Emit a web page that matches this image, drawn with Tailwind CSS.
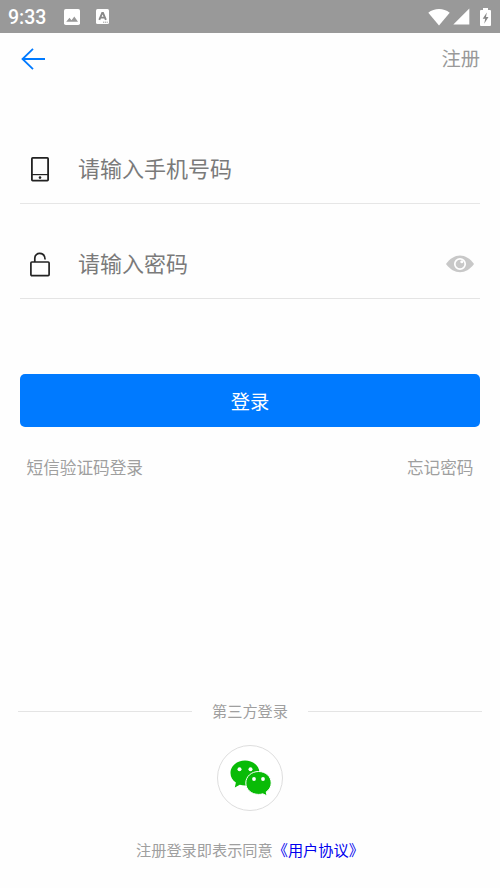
<!DOCTYPE html>
<html lang="zh-CN">
<head>
<meta charset="utf-8">
<meta name="viewport" content="width=device-width, initial-scale=1">
<title>登录</title>
<script src="https://cdn.jsdelivr.net/npm/@tailwindcss/browser@4"></script>
</head>
<body class="bg-white">
<div class="flex h-[888px] w-[500px] flex-col overflow-hidden bg-[#fefefe] font-['Noto_Sans_CJK_SC',sans-serif]">
  <!-- Status bar -->
  <div class="flex h-[33px] shrink-0 items-center bg-[#999999] pl-2 pr-[9px] text-white">
    <span class="w-[56px] pt-[2px] font-[Roboto,sans-serif] text-[19.5px] leading-none font-medium">9:33</span>
    <svg class="h-[16px] w-[16px]" viewBox="0 0 16 16"><rect width="16" height="16" rx="1.8" fill="#fff"/><path d="M2.2 12.8 5.5 8.8l2 2.4 2.8-3.6 3.7 5.2z" fill="#999"/></svg>
    <svg class="ml-[16px] h-[15px] w-[13px]" viewBox="0 0 13 15"><rect width="13" height="15" rx="1.5" fill="#fff"/><path d="M3.300 10.800 6.200 4h.8l2.900 6.800M4.400 8.600h4.400" fill="none" stroke="#888" stroke-width="1.900"/><path d="M7 13.2h5" stroke="#999" stroke-width="1" stroke-dasharray="1.2 .6"/></svg>
    <div class="ml-auto flex items-center">
      <svg class="h-[18px] w-[22px]" viewBox="0 0 22 18"><path d="M.3 4.7C6.4-.3 15.6-.3 21.7 4.7L11 17.6z" fill="#fff"/></svg>
      <svg class="ml-[3px] h-[17px] w-[17px]" viewBox="0 0 17 17"><path d="M16.3.5v16H.3z" fill="#fff"/></svg>
      <svg class="ml-[10px] h-[18px] w-[11px]" viewBox="0 0 11 18"><path d="M3 0h5v2h2q1 0 1 1v14q0 1-1 1H1q-1 0-1-1V3q0-1 1-1h2z" fill="#fff"/><path d="M6.800 4.500 2.700 10.700h2.500L4.200 15.800 8.500 9H6z" fill="#888"/></svg>
    </div>
  </div>
  <!-- Navigation -->
  <header class="flex h-[52px] shrink-0 items-center justify-between px-5">
    <svg class="h-[22px] w-[26px]" viewBox="0 0 26 22"><path d="M13 .8 2.5 11 13 21.2M2.500 11H25" fill="none" stroke="#007aff" stroke-width="1.8"/></svg>
    <a class="text-[19.3px] leading-none text-[#999]">注册</a>
  </header>
  <main class="flex flex-col px-5 pt-[49px]">
    <div class="flex h-[70px] items-start border-b border-[#e6e6e6]">
      <div class="flex h-[70px] w-[58px] items-center pl-[11px]">
        <svg class="h-[25px] w-[18px]" viewBox="0 0 18 25"><rect x=".9" y=".9" width="16.2" height="22.7" rx=".8" fill="none" stroke="#222" stroke-width="1.8"/><path d="M1 17.6h16" stroke="#222" stroke-width="1.2"/><circle cx="9" cy="20.600" r="1.3" fill="#222"/></svg>
      </div>
      <span class="flex h-[66px] items-center text-[22px] leading-none text-[#7a7a7a]">请输入手机号码</span>
    </div>
    <div class="mt-[25px] flex h-[70px] items-start border-b border-[#e4e4e4]">
      <div class="flex h-[70px] w-[58px] items-center pl-[10px]">
        <svg class="h-[25px] w-[20px]" viewBox="0 0 20 25"><rect x=".9" y="10" width="18.2" height="13.6" rx="1" fill="none" stroke="#222" stroke-width="1.7"/><path d="M4.8 10V6.2C4.8-.3 14.9-.5 15.1 7.5" fill="none" stroke="#222" stroke-width="1.7"/></svg>
      </div>
      <span class="flex h-[66px] flex-1 items-center text-[22px] leading-none text-[#7a7a7a]">请输入密码</span>
      <div class="flex h-[69px] items-center pr-[6px]">
        <svg class="h-[18px] w-[28px]" viewBox="0 0 28 18"><path d="M0 9C8-2.500 20-2.500 28 9 20 20 8 20 0 9z" fill="#c8c8c8"/><circle cx="14" cy="9" r="5.200" fill="#c8c8c8" stroke="#fff" stroke-width="1.700"/><circle cx="15.800" cy="6.800" r="1.500" fill="#fff"/></svg>
      </div>
    </div>
    <button class="mt-[75px] flex h-[53px] items-center justify-center rounded-[5px] bg-[#007aff] pt-[2px] text-[19.3px] leading-none text-white">登录</button>
    <div class="mt-[30px] flex h-5 items-center justify-between px-[6.5px] text-[16.65px] leading-none text-[#9f9f9f]">
      <a>短信验证码登录</a><a>忘记密码</a>
    </div>
  </main>
  <!-- Third-party sign-in -->
  <footer class="mt-[224px] flex flex-col items-center">
    <div class="flex h-5 w-full items-center gap-5 px-[18px] text-[15.2px] leading-none text-[#9f9f9f]">
      <div class="h-px flex-1 bg-[#e4e4e4]"></div><span>第三方登录</span><div class="h-px flex-1 bg-[#e4e4e4]"></div>
    </div>
    <div class="mt-6 flex h-[66px] w-[66px] items-center justify-center rounded-full border border-[#dedede] bg-white">
      <svg class="ml-[2px] h-[36px] w-[42px]" viewBox="0 0 42 36">
        <path d="M15 .5C6.8.5.5 6 .5 13c0 4 2.100 7.400 5.400 9.600L4.800 27.600l5-2.800c1.700.5 3.400.7 5.200.7C23.200 25.500 29.500 20 29.500 13S23.200.5 15 .5z" fill="#09bb07"/>
        <path d="M28.600 11.500C21.400 11.500 15.800 16.500 15.800 23s5.600 11.400 12.800 11.400c1.500 0 2.900-.2 4.200-.6l4.300 2.100-.9-4c3.100-2 5-5.200 5-8.900 0-6.500-5.400-11.500-12.600-11.500z" fill="#09bb07" stroke="#fff" stroke-width="1"/>
        <g fill="#fff"><circle cx="9.5" cy="9.3" r="2"/><circle cx="20.5" cy="9.3" r="2"/><circle cx="24" cy="19" r="1.9"/><circle cx="33" cy="19" r="1.9"/></g>
      </svg>
    </div>
    <p class="mt-[29px] flex h-5 w-full items-center pl-[136px] text-[15.2px] leading-none whitespace-nowrap text-[#9f9f9f]">注册登录即表示同意<a class="text-[#0000ee]">《用户协议》</a></p>
  </footer>
</div>
</body>
</html>
